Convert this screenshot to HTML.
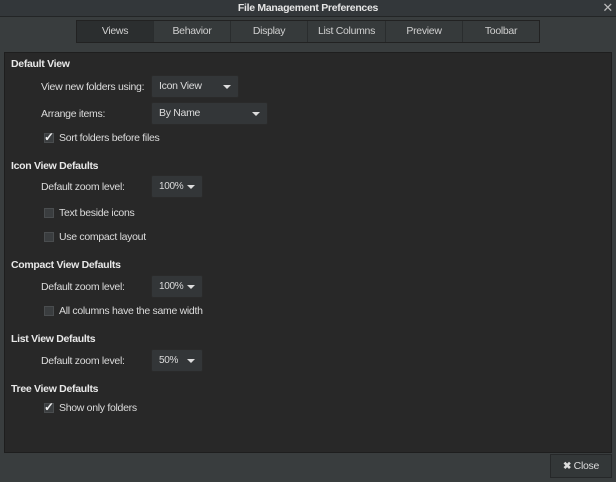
<!DOCTYPE html>
<html><head><style>
*{margin:0;padding:0;box-sizing:border-box}
body{width:616px;height:482px;background:#393d3e;font-family:"Liberation Sans",sans-serif;font-size:10.5px;color:#dcdcdc;position:relative;overflow:hidden;letter-spacing:-0.3px}
.title{position:absolute;left:0;top:0;width:616px;height:17px;background:#33373a;border-bottom:1px solid #232526;text-align:center;font-weight:bold;line-height:16px;color:#e6e6e6}
.x{position:absolute;right:3px;top:0;font-size:13px;font-weight:normal;color:#bbb}
.tabs{position:absolute;left:76px;top:20px;height:23px;display:flex;border:1px solid #222;background:#363a3b}
.tab{text-align:center;line-height:21px;border-right:1px solid #2a2d2e;color:#d0d0d0}
.tab:last-child{border-right:none}
.tab.a{background:#2b2e2f}
.panel{position:absolute;left:4px;top:52px;width:608px;height:401px;background:#282828;border:1px solid #1e1e1e}
.h{position:absolute;left:6px;font-weight:bold;color:#e8e8e8}
.l{position:absolute;left:36px}
.dd{position:absolute;height:23px;background:#333638;border:1px solid #2a2a2a;border-radius:2px;padding-left:7px;line-height:21px}
.dd:after{content:"";position:absolute;right:7px;top:9px;border-left:4px solid transparent;border-right:4px solid transparent;border-top:4px solid #ddd}
.cb{position:absolute;left:39px}
.cb i{position:absolute;left:0;top:0;width:10px;height:10px;background:#3a3d3f;border:1px solid #4a4d4f}
.cb b{position:absolute;left:0;top:-3px;font-weight:bold;font-size:12px;color:#eee}
.cb span{position:absolute;left:15px;top:-1px;white-space:nowrap}
.close{position:absolute;left:550px;top:454px;width:62px;height:24px;background:#333738;border:1px solid #262829;text-align:center;line-height:22px}
</style></head><body>
<div class="title">File Management Preferences<span class="x">✕</span></div>
<div class="tabs">
<div class="tab a" style="width:77px">Views</div><div class="tab" style="width:77px">Behavior</div><div class="tab" style="width:77px">Display</div><div class="tab" style="width:78px">List Columns</div><div class="tab" style="width:77px">Preview</div><div class="tab" style="width:76px">Toolbar</div></div>
<div class="panel">
<div class="h" style="top:5px">Default View</div>
<div class="l" style="top:28px">View new folders using:</div>
<div class="dd" style="left:146px;top:22px;width:88px">Icon View</div>
<div class="l" style="top:55px">Arrange items:</div>
<div class="dd" style="left:146px;top:49px;width:117px">By Name</div>
<div class="cb" style="top:80px"><i></i><b>✓</b><span>Sort folders before files</span></div>
<div class="h" style="top:107px">Icon View Defaults</div>
<div class="l" style="top:128px">Default zoom level:</div>
<div class="dd" style="left:146px;top:122px;width:52px;font-size:10px">100%</div>
<div class="cb" style="top:155px"><i></i><span>Text beside icons</span></div>
<div class="cb" style="top:179px"><i></i><span>Use compact layout</span></div>
<div class="h" style="top:206px">Compact View Defaults</div>
<div class="l" style="top:228px">Default zoom level:</div>
<div class="dd" style="left:146px;top:222px;width:52px;font-size:10px">100%</div>
<div class="cb" style="top:253px"><i></i><span>All columns have the same width</span></div>
<div class="h" style="top:280px">List View Defaults</div>
<div class="l" style="top:302px">Default zoom level:</div>
<div class="dd" style="left:146px;top:296px;width:52px;font-size:10px">50%</div>
<div class="h" style="top:330px">Tree View Defaults</div>
<div class="cb" style="top:350px"><i></i><b>✓</b><span>Show only folders</span></div>
</div>
<div class="close"><b style="font-size:10px">✖</b> Close</div>
</body></html>
